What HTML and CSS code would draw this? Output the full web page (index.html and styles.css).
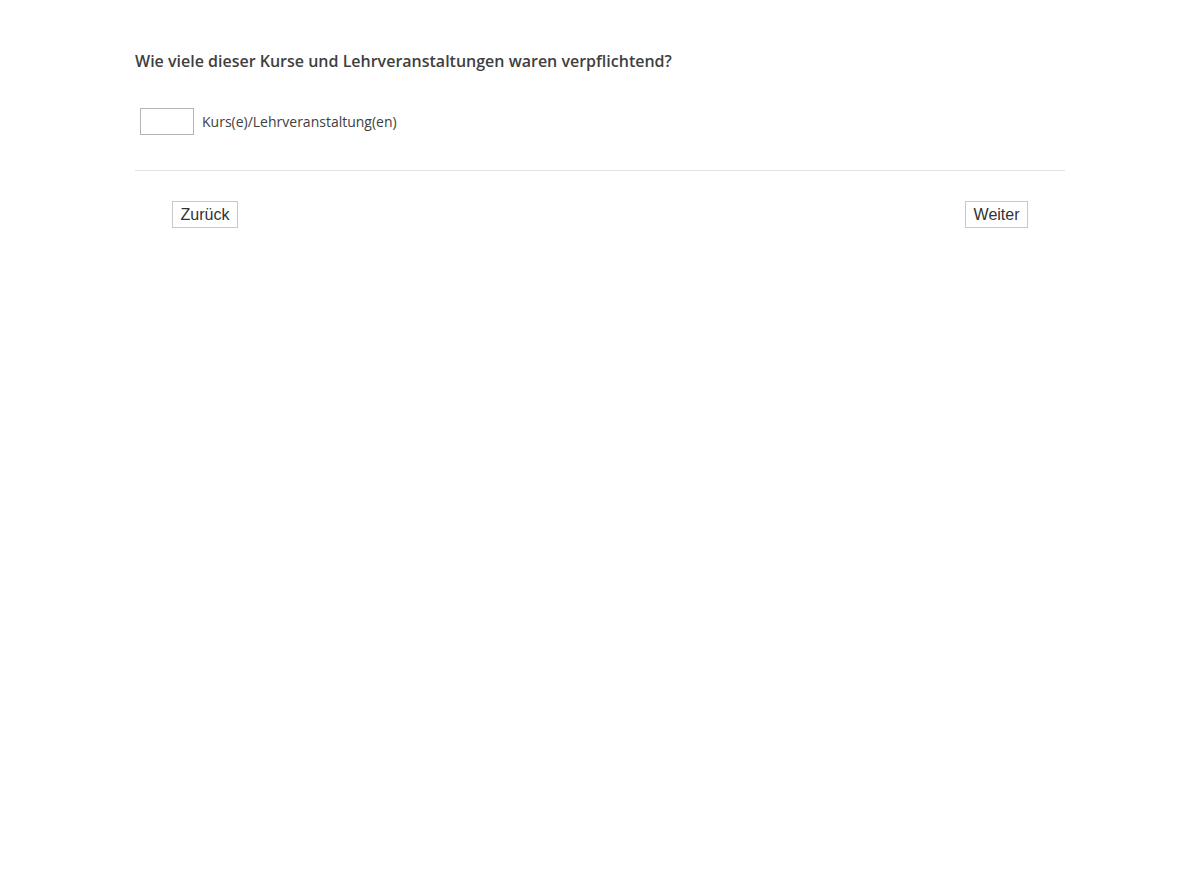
FILE: index.html
```html
<!DOCTYPE html>
<html lang="de">
<head>
    <meta charset="UTF-8">
    <meta name="viewport" content="width=device-width, initial-scale=1.0">
    <title>Umfrage</title>
    <link rel="stylesheet" href="styles.css">
</head>
<body>
    <div class="page">
        <form class="frage" name="f1">
            <h2 class="frage-titel">Wie viele dieser Kurse und Lehrveranstaltungen waren verpflichtend?</h2>
            <div class="antwort">
                <input type="text" class="zahl" name="anzahl">
                <label class="einheit">Kurs(e)/Lehrveranstaltung(en)</label>
            </div>
            <hr class="trenner">
            <div class="navigation">
                <input type="button" class="nav-btn" value="Zurück">
                <input type="button" class="nav-btn" value="Weiter">
            </div>
        </form>
    </div>
</body>
</html>
```
FILE: styles.css
```css
body{
    margin: 0;
    background-color: white;
    font-family: "Open Sans", "DejaVu Sans", sans-serif;
    color: #404040;
}
.page{
    width: 930px;
    margin: 0 auto;
    padding-top: 51px;
}
.frage-titel{
    margin: 0;
    font-size: 16px;
    font-weight: 600;
    line-height: 20px;
    color: #3f3f3f;
}
.antwort{
    display: flex;
    align-items: center;
    gap: 8px;
    margin-top: 37px;
    padding-left: 5px;
}
input.zahl{
    box-sizing: border-box;
    width: 54px;
    height: 27px;
    border: 1px solid #b3b3b3;
    margin: 0;
}
.einheit{
    font-size: 14px;
    color: #404040;
}
.trenner{
    border: 0;
    border-top: 1px solid #e3e3e3;
    margin: 35px 0 0 0;
}
.navigation{
    display: flex;
    justify-content: space-between;
    padding: 30px 37px 0 37px;
}
input.nav-btn{
    box-sizing: border-box;
    height: 27px;
    padding: 0 7.5px;
    margin: 0;
    background-color: white;
    border: 1px solid #c8c8c8;
    border-radius: 0;
    font-family: "Liberation Sans", Arial, sans-serif;
    font-size: 16px;
    color: #333;
    cursor: pointer;
}
```
